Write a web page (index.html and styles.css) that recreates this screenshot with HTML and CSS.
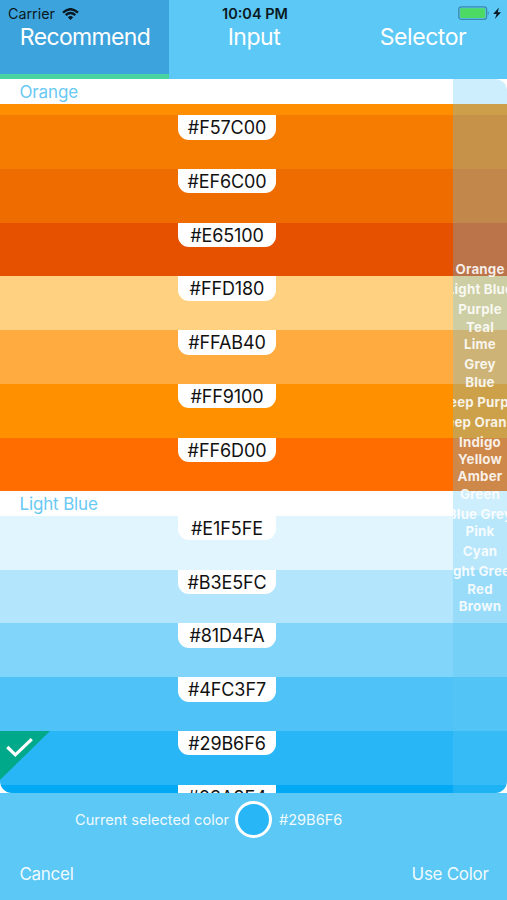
FILE: index.html
```
<!DOCTYPE html>
<html lang="en">
<head>
  <meta charset="UTF-8" />
  <meta name="viewport" content="width=device-width, initial-scale=1.0"/>
  <title>Color Picker</title>
  <link rel="stylesheet" href="styles.css">
</head>
<body>

  <div class="status-bar">
    <div class="carrier">
      <span class="carrier-name">Carrier</span>
      <svg class="wifi" viewBox="0 0 17 12" width="17" height="12">
        <path d="M1 4.6 Q8.5 -2.2 16 4.6" />
        <path d="M3.7 7.2 Q8.5 3 13.3 7.2" />
        <path class="wifi-dot" d="M5.8 9.2 Q8.5 7 11.2 9.2 L8.5 12 Z" />
      </svg>
    </div>
    <div class="clock">10:04 PM</div>
    <div class="power">
      <svg viewBox="0 0 44 15" width="44" height="15">
        <rect class="battery-case" x="0.8" y="0.8" width="27.8" height="12.6" rx="2.6" />
        <rect class="battery-level" x="2.2" y="2.2" width="25" height="9.8" rx="1.3" />
        <path class="battery-tip" d="M29.8 5 Q31.8 7.1 29.8 9.2 Z" />
        <path class="bolt" d="M41 1.5 L35.2 8 H38.6 L36.9 13 L43 6.2 H39.7 Z" />
      </svg>
    </div>
  </div>

  <div class="tabs">
    <div class="tab active"><span>Recommend</span></div>
    <div class="tab"><span>Input</span></div>
    <div class="tab"><span>Selector</span></div>
  </div>

  <div class="list-area">
    <div class="list">
      <div class="section">Orange</div>
      <div class="color peek"></div>
      <div class="color f57c00"><span>#F57C00</span></div>
      <div class="color ef6c00"><span>#EF6C00</span></div>
      <div class="color e65100"><span>#E65100</span></div>
      <div class="color ffd180"><span>#FFD180</span></div>
      <div class="color ffab40"><span>#FFAB40</span></div>
      <div class="color ff9100"><span>#FF9100</span></div>
      <div class="color ff6d00"><span>#FF6D00</span></div>
      <div class="section">Light Blue</div>
      <div class="color e1f5fe"><span>#E1F5FE</span></div>
      <div class="color b3e5fc"><span>#B3E5FC</span></div>
      <div class="color c81d4fa"><span>#81D4FA</span></div>
      <div class="color c4fc3f7"><span>#4FC3F7</span></div>
      <div class="color c29b6f6">
        <svg class="check" viewBox="0 0 50 49" width="50" height="49">
          <path class="check-corner" d="M0 0 H50 L0 49 Z" />
          <path class="check-mark" d="M7.3 16 L15.3 23.8 L31.8 8.2" />
        </svg>
        <span>#29B6F6</span>
      </div>
      <div class="color c03a9f4"><span>#03A9F4</span></div>

      <div class="index">
        <div class="deep">Orange</div>
        <div class="deep">Light Blue</div>
        <div class="deep">Purple</div>
        <div>Teal</div>
        <div>Lime</div>
        <div class="deep">Grey</div>
        <div>Blue</div>
        <div class="deep">Deep Purple</div>
        <div class="deep">Deep Orange</div>
        <div class="deep">Indigo</div>
        <div>Yellow</div>
        <div>Amber</div>
        <div>Green</div>
        <div class="deep">Blue Grey</div>
        <div>Pink</div>
        <div class="deep">Cyan</div>
        <div class="deep">Light Green</div>
        <div>Red</div>
        <div>Brown</div>
      </div>
    </div>
  </div>

  <div class="current">
    <span class="current-label">Current selected color</span>
    <div class="dot"></div>
    <span class="current-hex">#29B6F6</span>
  </div>

  <div class="actions">
    <span>Cancel</span>
    <span>Use Color</span>
  </div>

</body>
</html>
```
FILE: styles.css
```
* {
  box-sizing: border-box;
}

body {
  margin: 0;
  width: 507px;
  height: 900px;
  overflow: hidden;
  background-color: #5bc8f5;
  color: white;
  font-family: Inter, "Liberation Sans", sans-serif;
  display: flex;
  flex-direction: column;
  position: relative;
}

/* lies over the tabs */
.status-bar {
  position: absolute;
  top: 0;
  left: 0;
  width: 100%;
  height: 27px;
  padding: 0 5px 0 8px;
  display: grid;
  grid-template-columns: 1fr auto 1fr;
  align-items: center;
  color: #0b1a22;
  font-size: 14.3px;
  z-index: 2;
}

.carrier {
  display: flex;
  align-items: center;
  gap: 7px;
}

.wifi {
  fill: none;
  stroke: #0b1a22;
  stroke-width: 2.4;
}

.wifi .wifi-dot {
  fill: #0b1a22;
  stroke: none;
}

.clock {
  font-weight: 600;
  font-size: 14.5px;
}

.power {
  display: flex;
  justify-content: flex-end;
}

.battery-case {
  fill: none;
  stroke: #3d88ac;
  stroke-width: 1.3;
}

.battery-level {
  fill: #4cd964;
}

.battery-tip {
  fill: #3d88ac;
}

.bolt {
  fill: #0b1a22;
}

.tabs {
  height: 79px;
  flex: none;
  display: grid;
  grid-template-columns: repeat(3, 1fr);
}

.tab {
  padding-top: 22px;
  padding-left: 1px;
  text-align: center;
  font-size: 23px;
  letter-spacing: -0.45px;
  line-height: 30px;
  white-space: nowrap;
}

.tab.active {
  background-color: #3da3dc;
  border-bottom: 5px solid #48d3a0;
  letter-spacing: -0.65px;
}

.list-area {
  height: 713.5px;
  flex: none;
  background-color: white;
}

.list {
  height: 100%;
  overflow: hidden;
  position: relative;
  border-radius: 12px;
}

.section {
  height: 24.5px;
  padding-left: 19.5px;
  background-color: white;
  color: #68c9f3;
  font-size: 17px;
  letter-spacing: -0.15px;
  line-height: 26px;
}

.color {
  height: 53.75px;
  position: relative;
  display: flex;
  justify-content: center;
  align-items: flex-start;
  padding-right: 53px;
}

.color span {
  width: 98px;
  height: 24.5px;
  background-color: white;
  color: #111;
  border-radius: 0 0 11px 11px;
  text-align: center;
  font-size: 18px;
  letter-spacing: -0.1px;
  line-height: 25px;
}

.peek {
  height: 11.5px;
  background-color: #ff8f00;
}

.f57c00 { background-color: #f57c00; }
.ef6c00 { background-color: #ef6c00; }
.e65100 { background-color: #e65100; }
.ffd180 { background-color: #ffd180; }
.ffab40 { background-color: #ffab40; }
.ff9100 { background-color: #ff9100; }
.ff6d00 { background-color: #ff6d00; }
.e1f5fe { background-color: #e1f5fe; }
.b3e5fc { background-color: #b3e5fc; }
.c81d4fa { background-color: #81d4fa; }
.c4fc3f7 { background-color: #4fc3f7; }
.c29b6f6 { background-color: #29b6f6; }
.c03a9f4 { background-color: #03a9f4; }

.check {
  position: absolute;
  top: 0;
  left: 0;
}

.check-corner {
  fill: #00a98a;
}

.check-mark {
  fill: none;
  stroke: white;
  stroke-width: 3.2;
}

/* floating section index on the right */
.index {
  position: absolute;
  top: 0;
  right: 0;
  width: 54px;
  height: 100%;
  padding-top: 179.8px;
  overflow: hidden;
  background-color: rgba(91, 200, 245, 0.3);
  display: flex;
  flex-direction: column;
  align-items: center;
  color: rgba(255, 255, 255, 0.88);
  font-size: 13.3px;
  font-weight: 650;
  letter-spacing: 0.2px;
  line-height: 17.4px;
  white-space: nowrap;
}

.index div {
  height: 17.4px;
  flex: none;
}

.index .deep {
  height: 20px;
  padding-top: 2.6px;
}

.current {
  height: 54px;
  flex: none;
  display: flex;
  align-items: center;
  padding-left: 75px;
  gap: 6.5px;
  font-size: 14.6px;
  color: #f0faff;
}

.dot {
  width: 37px;
  height: 37px;
  border: 3px solid white;
  border-radius: 50%;
  background-color: #29b6f6;
}

.actions {
  flex: 1;
  display: flex;
  justify-content: space-between;
  align-items: center;
  padding: 1px 18.5px 0 19.5px;
  font-size: 17px;
  letter-spacing: -0.3px;
  color: #f0faff;
}
```
